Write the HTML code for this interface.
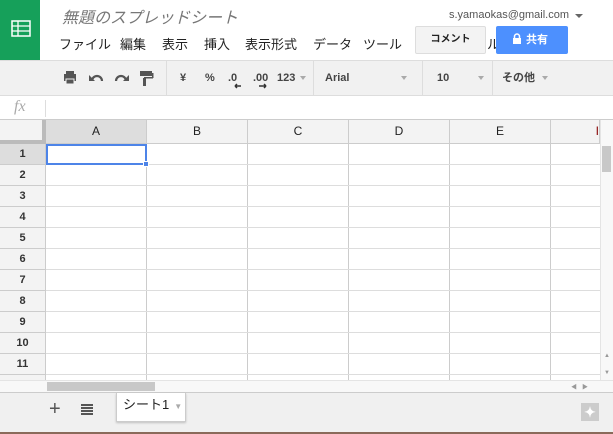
<!DOCTYPE html>
<html><head><meta charset="utf-8">
<style>
*{box-sizing:border-box;margin:0;padding:0}
body{width:613px;height:434px;overflow:hidden;background:#fff;font-family:"Liberation Sans","Noto Sans CJK JP",sans-serif;position:relative;color:#222}
.a{position:absolute}
.m{position:absolute;top:36px;font-size:13px;line-height:18px;color:#222;white-space:nowrap}
.sep{position:absolute;top:61px;width:1px;height:35px;background:#ddd}
.tb{position:absolute;top:71px;font-size:11px;line-height:14px;font-weight:bold;color:#444;white-space:nowrap}
.arr{position:absolute;top:76px;width:0;height:0;border-left:3px solid transparent;border-right:3px solid transparent;border-top:4px solid #aaa}
.ch{position:absolute;top:120px;height:24px;border-right:1px solid #ccc;border-bottom:1px solid #ccc;background:#f3f3f3;font-size:12px;text-align:center;line-height:23px;color:#222}
.rh{position:absolute;left:0;width:46px;height:21px;background:#f3f3f3;border-bottom:1px solid #ccc;border-right:1px solid #ccc;font-size:11px;font-weight:bold;text-align:center;line-height:21px;color:#333}
</style></head><body>
<div class="a" style="left:0;top:0;width:40px;height:60px;background:#16a05a"></div>
<svg class="a" style="left:11px;top:20px" width="20" height="18"><rect x="1" y="1" width="18" height="15" fill="none" stroke="#fff" stroke-width="1.5"/><line x1="1" y1="6" x2="19" y2="6" stroke="#fff" stroke-width="1.3"/><line x1="1" y1="11" x2="19" y2="11" stroke="#fff" stroke-width="1.3"/><line x1="7" y1="1" x2="7" y2="16" stroke="#fff" stroke-width="1.3"/></svg>
<div class="a" style="left:62px;top:9px;font-size:16px;line-height:20px;font-style:italic;color:#777">無題のスプレッドシート</div>
<div class="m" style="left:59px">ファイル</div>
<div class="m" style="left:120px">編集</div>
<div class="m" style="left:162px">表示</div>
<div class="m" style="left:204px">挿入</div>
<div class="m" style="left:245px">表示形式</div>
<div class="m" style="left:313px">データ</div>
<div class="m" style="left:363px">ツール</div>
<div class="a" style="left:449px;top:9px;font-size:11px;color:#555">s.yamaokas@gmail.com</div>
<div class="a" style="left:575px;top:14px;border-left:4px solid transparent;border-right:4px solid transparent;border-top:4px solid #666"></div>
<div class="a" style="left:415px;top:26px;width:71px;height:28px;background:#f3f3f3;border:1px solid #ddd;border-radius:2px;font-size:10px;font-weight:bold;text-align:center;line-height:26px">コメント</div>
<div class="m" style="left:487px">ル</div>
<div class="a" style="left:496px;top:26px;width:72px;height:28px;background:#4d90fe;border-radius:2px;color:#fff;font-size:11px;font-weight:bold;line-height:28px;padding-left:30px">共有</div>
<svg class="a" style="left:512px;top:33px" width="10" height="12"><path d="M2.5 5V3.5a2.5 2.5 0 0 1 5 0V5" fill="none" stroke="#fff" stroke-width="1.5"/><rect x="1" y="5" width="8" height="6" fill="#fff"/></svg>
<div class="a" style="left:0;top:60px;width:613px;height:36px;background:#f1f1f1;border-top:1px solid #ddd;border-bottom:1px solid #ddd"></div>
<svg class="a" style="left:62px;top:69px" width="100" height="18">
<rect x="2" y="5" width="12" height="7" fill="#555"/><rect x="4" y="2" width="8" height="3" fill="#555"/><rect x="4" y="10" width="8" height="5" fill="#555" stroke="#f1f1f1"/>
<path d="M30 12a5 5 0 0 1 10 0" fill="none" stroke="#555" stroke-width="2.2"/><path d="M27 6l0 6 6 0z" fill="#555"/>
<path d="M54 12a5 5 0 0 1 10 0" fill="none" stroke="#555" stroke-width="2.2"/><path d="M67 6l0 6-6 0z" fill="#555"/>
<rect x="78" y="2" width="12" height="5" fill="#555"/><rect x="90" y="4" width="1.5" height="5" fill="#555"/><rect x="82" y="8" width="9" height="1.5" fill="#555"/><rect x="81" y="9" width="3" height="8" fill="#555"/>
</svg>
<div class="sep" style="left:166px"></div>
<div class="tb" style="left:180px">¥</div>
<div class="tb" style="left:205px">%</div>
<div class="tb" style="left:228px">.0</div>
<div class="tb" style="left:253px">.00</div>
<svg class="a" style="left:233px;top:82px" width="40" height="8"><path d="M2 4h6M2 4l2-2M2 4l2 2" stroke="#333" stroke-width="1.5" fill="none"/><path d="M26 4h7M33 4l-2-2M33 4l-2 2" stroke="#333" stroke-width="1.5" fill="none"/></svg>
<div class="tb" style="left:277px">123</div><div class="arr" style="left:300px"></div>
<div class="sep" style="left:313px"></div>
<div class="tb" style="left:325px">Arial</div><div class="arr" style="left:401px"></div>
<div class="sep" style="left:422px"></div>
<div class="tb" style="left:437px">10</div><div class="arr" style="left:478px"></div>
<div class="sep" style="left:492px"></div>
<div class="tb" style="left:502px;top:71px">その他</div><div class="arr" style="left:542px"></div>
<div class="a" style="left:14px;top:98px;font-family:'Liberation Serif',serif;font-style:italic;font-size:16px;color:#aaa">fx</div>
<div class="a" style="left:45px;top:100px;width:1px;height:17px;background:#ddd"></div>
<div class="a" style="left:0;top:119px;width:613px;height:1px;background:#ccc"></div>
<div class="a" style="left:0;top:120px;width:46px;height:24px;background:#f3f3f3;border-right:4px solid #bbb;border-bottom:4px solid #bbb"></div>
<div class="ch" style="left:46px;width:101px;background:#ddd">A</div>
<div class="ch" style="left:147px;width:101px">B</div>
<div class="ch" style="left:248px;width:101px">C</div>
<div class="ch" style="left:349px;width:101px">D</div>
<div class="ch" style="left:450px;width:101px">E</div>
<div class="ch" style="left:551px;width:49px;text-align:right;color:#800">I</div>
<div class="a" style="left:46px;top:144px;width:554px;height:237px;background:
repeating-linear-gradient(to bottom,transparent 0 20px,#ddd 20px 21px),
repeating-linear-gradient(to right,transparent 0 100px,#ccc 100px 101px)"></div>
<div class="rh" style="top:144px;background:#ddd">1</div>
<div class="rh" style="top:165px">2</div>
<div class="rh" style="top:186px">3</div>
<div class="rh" style="top:207px">4</div>
<div class="rh" style="top:228px">5</div>
<div class="rh" style="top:249px">6</div>
<div class="rh" style="top:270px">7</div>
<div class="rh" style="top:291px">8</div>
<div class="rh" style="top:312px">9</div>
<div class="rh" style="top:333px">10</div>
<div class="rh" style="top:354px">11</div>
<div class="rh" style="top:375px;height:6px"></div>
<div class="a" style="left:46px;top:144px;width:101px;height:21px;border:2px solid #4d84e8"></div>
<div class="a" style="left:143px;top:161px;width:6px;height:6px;background:#4d84e8;border:1px solid #fff"></div>
<div class="a" style="left:600px;top:120px;width:13px;height:261px;background:#f8f8f8;border-left:1px solid #e4e4e4"></div>
<div class="a" style="left:602px;top:146px;width:9px;height:26px;background:#c8c8c8"></div>
<div class="a" style="left:604px;top:353px;font-size:6px;color:#999">▲</div>
<div class="a" style="left:604px;top:370px;font-size:6px;color:#999">▼</div>
<div class="a" style="left:0;top:380px;width:613px;height:13px;background:#f8f8f8;border-top:1px solid #e4e4e4;border-bottom:1px solid #ccc"></div>
<div class="a" style="left:47px;top:382px;width:108px;height:9px;background:#c8c8c8"></div>
<div class="a" style="left:571px;top:382px;font-size:6px;color:#999">◀ &nbsp;&nbsp;▶</div>
<div class="a" style="left:0;top:393px;width:613px;height:39px;background:#f0f0f0"></div>
<div class="a" style="left:0;top:432px;width:613px;height:2px;background:#8a6a5a"></div>
<div class="a" style="left:49px;top:398px;font-size:20px;color:#555">+</div>
<div class="a" style="left:81px;top:404px;width:12px;height:11px;background:repeating-linear-gradient(#555 0 2px,transparent 2px 3px)"></div>
<div class="a" style="left:116px;top:393px;width:70px;height:29px;background:#fff;border:1px solid #ccc;border-top:none;box-shadow:0 1px 2px rgba(0,0,0,.2);font-size:13px;line-height:24px;padding-left:6px">シート1<span style="font-size:8px;color:#aaa;margin-left:5px">▼</span></div>
<div class="a" style="left:581px;top:403px;width:18px;height:18px;background:#ccc;color:#fff;font-size:14px;text-align:center;line-height:18px;font-weight:bold">✦</div>
</body></html>
